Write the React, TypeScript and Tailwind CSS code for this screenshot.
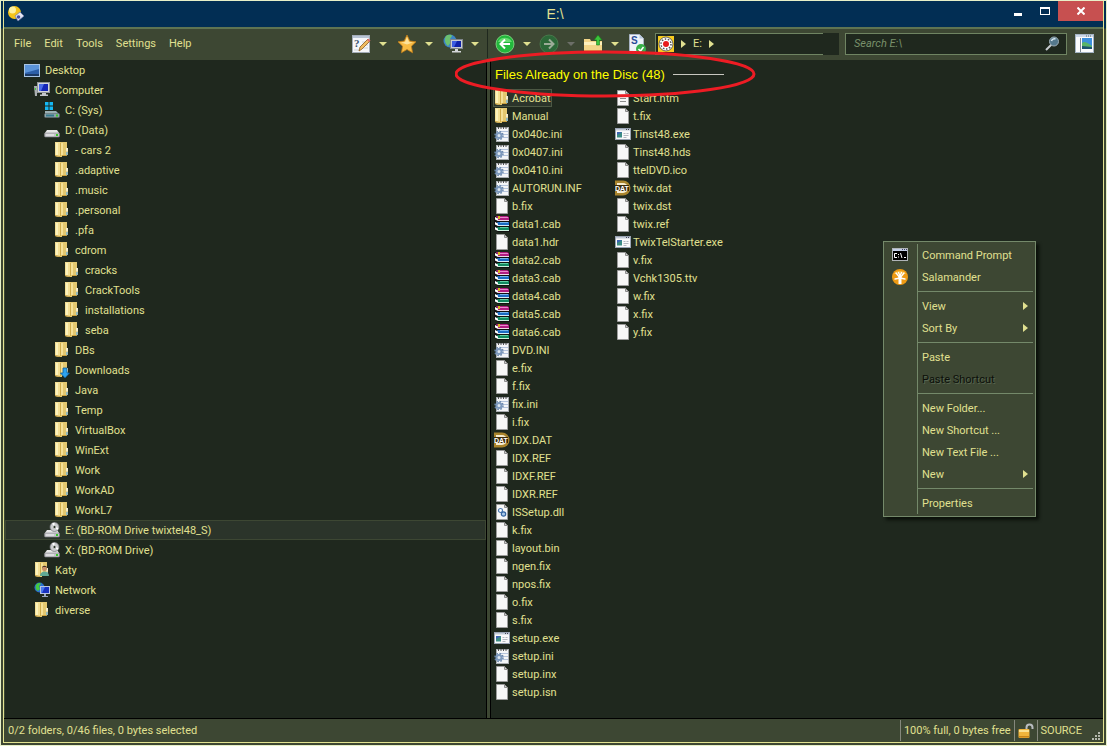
import { useState } from "react";
import type { ReactNode } from "react";

type IconName =
  | "desktop" | "computer" | "sysdrive" | "drive" | "folder" | "downloads"
  | "optical" | "user" | "network" | "ini" | "file" | "cab" | "exe"
  | "dat" | "dll" | "html" | "cmd" | "salamander" | "lock";

type TreeNode = { label: string; icon: IconName; level: number };

const tree: TreeNode[] = [
  { label: "Desktop", icon: "desktop", level: 0 },
  { label: "Computer", icon: "computer", level: 1 },
  { label: "C: (Sys)", icon: "sysdrive", level: 2 },
  { label: "D: (Data)", icon: "drive", level: 2 },
  { label: "- cars 2", icon: "folder", level: 3 },
  { label: ".adaptive", icon: "folder", level: 3 },
  { label: ".music", icon: "folder", level: 3 },
  { label: ".personal", icon: "folder", level: 3 },
  { label: ".pfa", icon: "folder", level: 3 },
  { label: "cdrom", icon: "folder", level: 3 },
  { label: "cracks", icon: "folder", level: 4 },
  { label: "CrackTools", icon: "folder", level: 4 },
  { label: "installations", icon: "folder", level: 4 },
  { label: "seba", icon: "folder", level: 4 },
  { label: "DBs", icon: "folder", level: 3 },
  { label: "Downloads", icon: "downloads", level: 3 },
  { label: "Java", icon: "folder", level: 3 },
  { label: "Temp", icon: "folder", level: 3 },
  { label: "VirtualBox", icon: "folder", level: 3 },
  { label: "WinExt", icon: "folder", level: 3 },
  { label: "Work", icon: "folder", level: 3 },
  { label: "WorkAD", icon: "folder", level: 3 },
  { label: "WorkL7", icon: "folder", level: 3 },
  { label: "E: (BD-ROM Drive twixtel48_S)", icon: "optical", level: 2 },
  { label: "X: (BD-ROM Drive)", icon: "optical", level: 2 },
  { label: "Katy", icon: "user", level: 1 },
  { label: "Network", icon: "network", level: 1 },
  { label: "diverse", icon: "folder", level: 1 },
];

const indents = ["pl-[18px]", "pl-[28px]", "pl-[38px]", "pl-[48px]", "pl-[58px]"];

const columns = [
  [
    "Acrobat", "Manual", "0x040c.ini", "0x0407.ini", "0x0410.ini", "AUTORUN.INF", "b.fix",
    "data1.cab", "data1.hdr", "data2.cab", "data3.cab", "data4.cab", "data5.cab", "data6.cab",
    "DVD.INI", "e.fix", "f.fix", "fix.ini", "i.fix", "IDX.DAT", "IDX.REF", "IDXF.REF",
    "IDXR.REF", "ISSetup.dll", "k.fix", "layout.bin", "ngen.fix", "npos.fix", "o.fix",
    "s.fix", "setup.exe", "setup.ini", "setup.inx", "setup.isn",
  ],
  [
    "Start.htm", "t.fix", "Tinst48.exe", "Tinst48.hds", "ttelDVD.ico", "twix.dat", "twix.dst",
    "twix.ref", "TwixTelStarter.exe", "v.fix", "Vchk1305.ttv", "w.fix", "x.fix", "y.fix",
  ],
];

const extIcons: Record<string, IconName> = {
  ini: "ini", inf: "ini", cab: "cab", exe: "exe", dat: "dat", dll: "dll", htm: "html",
};

function iconFor(name: string): IconName {
  if (!name.includes(".")) return "folder";
  return extIcons[name.split(".")[1].toLowerCase()] ?? "file";
}

const menuGroups: { label: string; icon?: IconName; sub?: boolean; disabled?: boolean }[][] = [
  [{ label: "Command Prompt", icon: "cmd" }, { label: "Salamander", icon: "salamander" }],
  [{ label: "View", sub: true }, { label: "Sort By", sub: true }],
  [{ label: "Paste" }, { label: "Paste Shortcut", disabled: true }],
  [{ label: "New Folder..." }, { label: "New Shortcut ..." }, { label: "New Text File ..." }, { label: "New", sub: true }],
  [{ label: "Properties" }],
];

const page = (
  <>
    <path d="M2.500.5h8l3 3v12h-11z" fill="#f7f7f7" stroke="#9c9c9c" />
    <path d="M10.500 .5v3h3z" fill="#d0d0d0" stroke="#8c8c8c" />
  </>
);

const folder = (
  <>
    <path d="M1 0h12v14H8v1H6l-5-1z" fill="#e4c870" />
    <path d="M1 0h5v15l-5-1z" fill="#f3df94" />
    <path d="M2 1h2v12H2z" fill="#fbf2bc" />
    <path d="M6 1h1v13H6z" fill="#d0ac4c" />
    <path d="M7 1h2v12H7z" fill="#f4e098" />
    <path d="M1 13l5 1v1l-5-1zM8 13h5v1H8z" fill="#c8a040" />
    <path d="M12 6h2v7h-2z" fill="#e4d49c" />
    <path d="M12.500 6h1v3h-1z" fill="#fff" />
    <path d="M12.500 10h1v3h-1z" fill="#3f9be0" />
  </>
);

const disk = (
  <>
    <path d="M3 8h10l2.500 3.500H.5z" fill="#e6e6e6" />
    <rect x=".5" y="11" width="15" height="4" rx="1" fill="#c4c4c8" stroke="#85858a" strokeWidth=".6" />
    <rect x="2" y="12.500" width="8" height="1" fill="#f4f4f4" />
    <rect x="12" y="12" width="2" height="2" fill="#38c828" />
  </>
);

const icons: Record<IconName, ReactNode> = {
  file: page,
  folder,
  desktop: (
    <>
      <rect x=".5" y="2.500" width="15" height="12" fill="#2d5fa8" stroke="#a8c4e4" />
      <path d="M1 3h14v4L1 11z" fill="#5b93d8" />
      <path d="M1 12h14v2H1z" fill="#1c3a66" />
    </>
  ),
  computer: (
    <>
      <path d="M0 4h3v10H1z" fill="#a9aeb0" />
      <path d="M1 6h1v2H1z" fill="#3ed23a" />
      <rect x="3.500" y=".5" width="12" height="10" fill="#d4d6da" stroke="#8f9398" />
      <rect x="5" y="2" width="9" height="7" fill="#1526b8" />
      <path d="M5 2h5L7 9H5z" fill="#4b6be8" />
      <path d="M8 11h4v1.500h2V14H6v-1.500h2z" fill="#c5c8cc" />
    </>
  ),
  sysdrive: (
    <>
      <path d="M1 9h11l3 3H1z" fill="#9bb0b4" />
      <rect x=".5" y="11.500" width="15" height="4" rx="1" fill="#8fa3a8" stroke="#5c6c70" strokeWidth=".6" />
      <rect x="2" y="12.500" width="8" height="2" fill="#34788c" />
      <rect x="12" y="12.500" width="2" height="2" fill="#38c828" />
      <path d="M1 0h3.500v3.500H1zM5.500 0H9v3.500H5.500zM1 4.500h3.500V8H1zM5.500 4.500H9V8H5.500z" fill="#14b8f4" />
    </>
  ),
  drive: disk,
  downloads: (
    <>
      {folder}
      <path d="M9 6h4v5h2.500L11 16 6.500 11H9z" fill="#2ea2ee" stroke="#0b5a9c" strokeWidth=".8" />
    </>
  ),
  optical: (
    <>
      {disk}
      <circle cx="10.500" cy="5" r="4.500" fill="#c9c9cc" stroke="#77777c" strokeWidth=".7" />
      <path d="M10.500 5L8 1.500l2.500-1zM10.500 5l3 3 1-2z" fill="#fff" />
      <circle cx="10.500" cy="5" r="1.500" fill="#2b342a" stroke="#eee" strokeWidth=".6" />
    </>
  ),
  user: (
    <>
      {folder}
      <circle cx="10.500" cy="6.500" r="2.500" fill="#c89068" />
      <path d="M8 6c0-3 5-3 5 0l-1-1H9z" fill="#4a3428" />
      <path d="M6 14c0-6 9-6 9 0z" fill="#5fa894" />
    </>
  ),
  network: (
    <>
      <circle cx="5.500" cy="5.500" r="5" fill="#2a6fd0" />
      <path d="M2 3c2-3 5-2 5-1L5 4l1 3-2 2C2 8 1 6 2 3z" fill="#46c840" />
      <rect x="6.500" y="4.500" width="9" height="7" fill="#1830c0" stroke="#b8c4e0" />
      <path d="M7 5h4L8 11H7z" fill="#4a78ee" />
      <path d="M10 12h2v2h2v1H8v-1h2z" fill="#9aa6c4" />
    </>
  ),
  ini: (
    <>
      <rect x="2.500" y="1.500" width="12" height="14" fill="#f4f6f8" stroke="#a8acb0" />
      <path d="M4 1h1v2H4zM6.500 1h1v2h-1zM9 1h1v2H9zM11.500 1h1v2h-1z" fill="#555" />
      <path d="M7 5.500h7M7 8.500h7M7 11.500h7" stroke="#b4c4dc" />
      <circle cx="5" cy="9.500" r="4" fill="none" stroke="#6684a8" strokeWidth="1.500" strokeDasharray="1.600 1.540" />
      <circle cx="5" cy="9.500" r="2.500" fill="#dce6f0" stroke="#7c98bc" strokeWidth="2" />
    </>
  ),
  cab: (
    <>
      <path d="M0 0h13l3 1v15H4L0 13z" fill="#111" />
      <path d="M2 0h11l2 1v3H4z" fill="#b01c80" />
      <path d="M6 1h8v1H6z" fill="#e888cc" />
      <path d="M4 4h11v1H4z" fill="#f0d8e8" />
      <path d="M3 6h12v3H4z" fill="#1c6cc4" />
      <path d="M6 6h8v1H6z" fill="#74b4ec" />
      <path d="M4 9h11v1H4z" fill="#d8ecf8" />
      <path d="M3 11h12v3H4z" fill="#128a60" />
      <path d="M6 11h8v1H6z" fill="#60d0a4" />
      <path d="M4 14h11v1H4z" fill="#c8f0dc" />
      <path d="M1 1l3 1.500V5L1 3.500zM1 6l3 1.500V10L1 8.500zM1 11l3 1.500V15l-3-1.500z" fill="#fff" />
      <path d="M4 0h2v3H4z" fill="#d8b820" />
    </>
  ),
  exe: (
    <>
      <rect x=".5" y="2.500" width="15" height="11" fill="#fafafa" stroke="#9aa4b4" />
      <path d="M1 3h14v1.500H1z" fill="#c4ccd8" />
      <path d="M11 3h1v1h-1zM13 3h1v1h-1z" fill="#445" />
      <rect x="2" y="6" width="5" height="5.500" fill="#3c8c84" />
      <path d="M2 6h5L2 9z" fill="#3c62b4" />
      <path d="M8.500 7.500h2M11.500 7.500h2M8.500 9.500h5M8.500 11.500h3" stroke="#b4b8c0" />
    </>
  ),
  dat: (
    <>
      <path d="M0 .5h8a7.500 7.500 0 0 1 0 15H0z" fill="#a9842c" />
      <path d="M2 3h6a5 5 0 0 1 0 10H2z" fill="#f6ecd0" />
      <rect y="5" width="14" height="6" fill="#3a2a08" />
      <text x="0" y="10.500" fontSize="7" fontWeight="bold" fill="#fff" fontFamily="Liberation Sans, sans-serif">DAT</text>
    </>
  ),
  dll: (
    <>
      {page}
      <circle cx="6.500" cy="6.500" r="2" fill="#fff" stroke="#4a78b0" strokeWidth="1.200" />
      <circle cx="9.500" cy="10" r="2.200" fill="#a8c8e8" stroke="#3464a0" strokeWidth="1.200" />
    </>
  ),
  html: (
    <>
      {page}
      <path d="M5 5.500h3M5 8.500h6M5 11.500h6" stroke="#8c8c8c" />
    </>
  ),
  cmd: (
    <>
      <rect x=".5" y="1.500" width="15" height="12" fill="#000" stroke="#b0b4b8" />
      <path d="M1 2h14v2H1z" fill="#c4d0e8" />
      <path d="M10 2h1v1h-1zM12 2h1v1h-1zM14 2h1v1h-1z" fill="#446" />
      <path d="M5 6.500H2.500v4H5M6.500 7v1M6.500 9.500v1M8.500 6l1.500 5M12 10.500h2" stroke="#fff" fill="none" />
    </>
  ),
  salamander: (
    <>
      <circle cx="8" cy="8" r="8" fill="#ee9a14" />
      <path d="M2 5a7 6 0 0 1 12 0z" fill="#f8c048" />
      <path d="M4 4l4 5 4-5M3 10l5-1 5 1M6.500 3.500L8 7l1.500-3.500" stroke="#fff" strokeWidth="1.300" strokeLinecap="round" fill="none" />
      <path d="M6.500 8h3v7h-3z" fill="#fff" />
    </>
  ),
  lock: (
    <>
      <path d="M8.500 7V4.500a3 3 0 0 1 6 0V6" fill="none" stroke="#b9bcc0" strokeWidth="2" />
      <rect x=".5" y="6" width="11" height="9" rx="1" fill="#f0b43c" />
      <path d="M1 7h10v2H1z" fill="#fbe090" />
      <path d="M1 13h10v1.500H1z" fill="#c88418" />
    </>
  ),
};

function Icon({ name }: { name: IconName }) {
  return (
    <svg className="h-4 w-4 shrink-0" viewBox="0 0 16 16" aria-hidden="true">
      {icons[name]}
    </svg>
  );
}

function Caret({ label, dim }: { label: string; dim?: boolean }) {
  return (
    <button aria-label={label} className="flex h-5 w-6 items-center justify-center">
      <svg className="h-1 w-2" viewBox="0 0 8 4">
        <path d="M0 0h8L4 4z" fill={dim ? "#6c6f68" : "#e0e090"} />
      </svg>
    </button>
  );
}

function Crumb() {
  return (
    <svg className="mx-[7px] h-2 w-[5px] shrink-0" viewBox="0 0 5 8" aria-hidden="true">
      <path d="M0 0l5 4-5 4z" fill="#e0e090" />
    </svg>
  );
}

function ToolButton({ label, children }: { label: string; children: ReactNode }) {
  return (
    <button aria-label={label} className="h-5 w-5 shrink-0">
      <svg className="h-5 w-5" viewBox="0 0 20 20">{children}</svg>
    </button>
  );
}

function TitleBar() {
  return (
    <header className="flex h-[26px] items-start bg-[#022e54]">
      <div className="flex flex-1 items-center pt-1 pl-[3px]">
        <svg className="h-[18px] w-[18px]" viewBox="0 0 18 18" aria-hidden="true">
          <circle cx="7.500" cy="7.500" r="6.500" fill="#f4c41c" />
          <circle cx="5.500" cy="5" r="3.500" fill="#fdf0a0" />
          <path d="M8 11l5-4 4 4-6 5z" fill="#e4e6f4" stroke="#7078a8" strokeWidth=".7" />
          <circle cx="11.500" cy="12" r="1.800" fill="#4850a0" />
        </svg>
      </div>
      <h1 className="self-center font-['Liberation_Sans',sans-serif] text-sm">E:\</h1>
      <div className="flex flex-1 justify-end">
        <button aria-label="Minimize" className="flex h-5 w-7 items-center justify-center pt-1.5">
          <span className="h-[3px] w-2 bg-white" />
        </button>
        <button aria-label="Maximize" className="flex h-5 w-[26px] items-center justify-center">
          <span className="h-2 w-2.5 border border-t-2 border-white" />
        </button>
        <button aria-label="Close" className="flex h-5 w-[45px] items-center justify-center bg-[#c75050]">
          <svg className="h-2 w-2" viewBox="0 0 8 8">
            <path d="M.5.5l7 7M7.500.5l-7 7" stroke="#fff" strokeWidth="2" />
          </svg>
        </button>
      </div>
    </header>
  );
}

function LeftToolbar() {
  return (
    <div className="flex w-[484px] shrink-0 items-center border-r border-[#1f281e]">
      <nav className="flex flex-1 gap-[13px] pl-[10px]">
        {["File", "Edit", "Tools", "Settings", "Help"].map((item) => (
          <button key={item}>{item}</button>
        ))}
      </nav>
      <div className="flex items-center gap-0.5">
        <div className="flex">
          <ToolButton label="Customize">
            <rect x="1.500" y="1.500" width="17" height="17" fill="#f6f7f9" stroke="#a4adb8" />
            <path d="M2 2h16v2H2z" fill="#b8c4d4" />
            <text x="3" y="13" fontSize="11" fontWeight="bold" fill="#38506c" fontFamily="Liberation Serif, serif">?</text>
            <path d="M3 16h6M11 8h6M11 11h6M11 14h6" stroke="#ccd2da" />
            <path d="M8 17l1-4 8-8 2 2-8 8z" fill="#f0bc60" stroke="#8c5c20" strokeWidth=".8" />
            <path d="M16 6l1.500-1.500 2 2L18 8z" fill="#e07070" />
          </ToolButton>
          <Caret label="Customize options" />
        </div>
        <div className="flex">
          <ToolButton label="Favorites">
            <path d="M10 1l2.800 6 6.200.8-4.600 4.400 1.200 6.600L10 15.500l-5.600 3.300 1.200-6.600L1 7.800 7.200 7z" fill="#f8bc44" stroke="#c07c18" strokeWidth=".8" />
            <path d="M10 3l2 5 4 .5-6 2-6-2L8 8z" fill="#fde29a" />
          </ToolButton>
          <Caret label="Favorites options" />
        </div>
        <div className="flex">
          <ToolButton label="Network">
            <circle cx="7" cy="7" r="6.500" fill="#3c84c4" />
            <path d="M3 2c3-2 6-1 6 0L7 5l2 2-4 5C2 10 1 5 3 2z" fill="#6cc070" />
            <rect x="7.500" y="5.500" width="12" height="9" fill="#c8ccd0" stroke="#80868c" />
            <rect x="9" y="7" width="9" height="6" fill="#1022a8" />
            <path d="M9 7h5l-3 6H9z" fill="#3c5ce0" />
            <path d="M12 15h3v2h3v1.500H9V17h3z" fill="#d4d6d8" />
          </ToolButton>
          <Caret label="Network options" />
        </div>
      </div>
    </div>
  );
}

function RightToolbar() {
  return (
    <div className="flex min-w-0 flex-1 items-center pr-2 pl-[7px]">
      <ToolButton label="Back">
        <circle cx="10" cy="10" r="9" fill="#22b83c" stroke="#8ce08c" strokeWidth=".8" />
        <path d="M3 8a7.500 6.500 0 0 1 14 0z" fill="#66dc70" />
        <path d="M15 10H6M10 5.500L5.500 10l4.500 4.500" stroke="#fff" strokeWidth="2" fill="none" />
      </ToolButton>
      <Caret label="Back history" />
      <ToolButton label="Forward">
        <circle cx="10" cy="10" r="9" fill="#2c6838" stroke="#4c8050" strokeWidth=".8" />
        <path d="M5 10h9M10 5.500l4.500 4.500-4.500 4.500" stroke="#9cac98" strokeWidth="2" fill="none" />
      </ToolButton>
      <Caret label="Forward history" dim />
      <ToolButton label="Up">
        <path d="M1 5h6l1 2h11v10H1z" fill="#f2d588" />
        <path d="M1 8h18v3H1z" fill="#fdf0bc" />
        <path d="M1 16h18v1H1z" fill="#d8ac50" />
        <path d="M15 1l4 5h-2.500v5h-3V6H11z" fill="#3cc43c" stroke="#167818" strokeWidth=".6" />
      </ToolButton>
      <Caret label="Parent folders" />
      <ToolButton label="Sync">
        <path d="M2.500.5h10l4 4v14h-14z" fill="#eef2f8" stroke="#a8b4c4" />
        <path d="M12.500.5v4h4z" fill="#b8c8dc" />
        <text x="4" y="10" fontSize="10" fontWeight="bold" fill="#284c98" fontFamily="Liberation Sans, sans-serif">S</text>
        <circle cx="14" cy="15" r="5" fill="#38b048" />
        <path d="M11.500 15l2 2 3-4" stroke="#fff" strokeWidth="1.500" fill="none" />
      </ToolButton>
      <div className="ml-2 flex h-[22px] flex-1">
        <div className="flex flex-1 items-center border border-r-0 border-[#6f8462] bg-[#1f281e] pl-0.5">
          <svg className="h-4 w-4" viewBox="0 0 16 16" aria-hidden="true">
            <path d="M0 0h16v16H0z" fill="#f8cc20" />
            <circle cx="8" cy="8" r="7" fill="#fff" stroke="#444" strokeWidth=".8" />
            <circle cx="8" cy="8" r="5" fill="none" stroke="#555" strokeWidth="1.500" strokeDasharray="1.500 1.600" />
            <circle cx="8" cy="8" r="3" fill="#e81c1c" />
          </svg>
          <Crumb />
          <button>E:</button>
          <Crumb />
        </div>
        <button aria-label="Address history" className="w-4 bg-[#1f281e]" />
      </div>
      <label className="ml-1.5 flex h-[22px] w-[222px] items-center border border-[#6f8462] bg-[#1f281e] pr-1.5 pl-2">
        <input
          type="text"
          aria-label="Search"
          placeholder="Search E:\"
          className="min-w-0 flex-1 bg-transparent italic outline-none placeholder:text-[#78906a]"
        />
        <svg className="h-4 w-4" viewBox="0 0 16 16" aria-hidden="true">
          <path d="M2 14l6-6" stroke="#c8ccd0" strokeWidth="2" />
          <circle cx="10" cy="5.500" r="4.500" fill="#54788c" stroke="#9cacb4" />
          <path d="M7.500 5a3 3 0 0 1 4-2" stroke="#dcecf4" strokeWidth="1.500" fill="none" />
        </svg>
      </label>
      <span className="w-2" />
      <ToolButton label="Preview pane">
        <rect x=".5" y=".5" width="18" height="18" fill="#fbfcfd" stroke="#a4b4c4" />
        <path d="M1 1h17v2H1z" fill="#ccd8e8" />
        <path d="M11 1.500h1v1h-1zM13 1.500h1v1h-1zM15 1.500h1v1h-1z" fill="#566" />
        <path d="M5 4h1v14H5z" fill="#7c8894" />
        <rect x="7" y="4" width="10" height="11" fill="#3c90dc" />
        <path d="M7 9c3-3 7 1 10 3v3H7z" fill="#58b468" />
        <path d="M7 12l10 1v2H7z" fill="#1c5470" />
      </ToolButton>
    </div>
  );
}

function ContextMenu() {
  return (
    <div
      role="menu"
      className="absolute top-[240px] left-[882px] w-[153px] border border-[#74896a] bg-[#3d4733] py-0.5 shadow-[3px_3px_3px_#0b100a]"
    >
      {menuGroups.map((group, g) => (
        <div key={g} className="flex flex-col">
          {g > 0 && (
            <div className="flex h-[7px]">
              <span className="w-[34px] border-r border-[#74896a]" />
              <span className="mr-0.5 h-1 flex-1 border-b border-[#74896a]" />
            </div>
          )}
          {group.map((item) => (
            <button key={item.label} role="menuitem" disabled={item.disabled} className="flex h-[22px] items-center text-left">
              <span className="flex h-full w-[34px] shrink-0 items-center border-r border-[#74896a] pl-2">
                {item.icon && <Icon name={item.icon} />}
              </span>
              <span className={item.disabled ? "flex-1 pl-1 text-[#0c0f0a] [text-shadow:1px_1px_0_#586650]" : "flex-1 pl-1"}>
                {item.label}
              </span>
              {item.sub && <Crumb />}
            </button>
          ))}
        </div>
      ))}
    </div>
  );
}

function App() {
  const [place, setPlace] = useState("E: (BD-ROM Drive twixtel48_S)");
  const [selected, setSelected] = useState("Acrobat");

  return (
    <div className="relative flex min-h-screen flex-col border border-[#e8f0c8] bg-gradient-to-b from-[#022e54] from-[27px] to-[#3d4733] to-[28px] px-0.5 pb-0.5 font-['Roboto',sans-serif] text-[11px] leading-[17px] text-[#e0e090]">
      <div className="flex flex-1 flex-col border border-t-0 border-[#e4e492] bg-[#3d4733]">
        <TitleBar />
        {/* Toolbars */}
        <div className="flex h-[33px] border-t-2 border-[#5f7452] pb-0.5">
          <LeftToolbar />
          <RightToolbar />
        </div>
        {/* Panes */}
        <main className="flex flex-1 border-b border-black">
          <ul className="ml-px w-[482px] shrink-0 border-r border-black bg-[#1f281e]">
            {tree.map((node, i) => (
              <li key={i}>
                <button
                  onClick={() => setPlace(node.label)}
                  className={`flex h-5 w-full items-center gap-[5px] border whitespace-nowrap ${indents[node.level]} ${
                    node.label === place ? "border-[#3d4733] bg-[#2b342a]" : "border-transparent"
                  }`}
                >
                  <Icon name={node.icon} />
                  {node.label}
                </button>
              </li>
            ))}
          </ul>
          <section className="ml-[3px] flex-1 border-l border-black bg-[#1f281e] pb-4">
            <div className="flex h-[29px] items-center gap-2 pl-1">
              <h2 className="font-['Liberation_Sans',sans-serif] text-[13px] text-[#ffff00]">Files Already on the Disc (48)</h2>
              <span className="h-px w-[51px] bg-[#c8c8c0]" />
            </div>
            <div className="flex pl-0.5">
              {columns.map((files, c) => (
                <ul key={c} className="w-[121px]">
                  {files.map((file) => (
                    <li key={file} className="h-[18px]">
                      <button
                        onClick={() => setSelected(file)}
                        className={`flex h-[18px] items-center gap-0.5 border whitespace-nowrap ${
                          file === selected ? "border-[#4c5844] bg-[#2b342a]" : "border-transparent"
                        }`}
                      >
                        <Icon name={iconFor(file)} />
                        {file}
                      </button>
                    </li>
                  ))}
                </ul>
              ))}
            </div>
          </section>
        </main>
        {/* Status bar */}
        <footer className="flex h-[23px] items-center pl-1">
          <span className="flex-1">0/2 folders, 0/46 files, 0 bytes selected</span>
          <span className="flex h-[21px] items-center border-l border-[#85887c] px-[3px]">100% full, 0 bytes free</span>
          <span className="flex h-[21px] items-center border-l border-[#85887c] px-[3px]">
            <Icon name="lock" />
          </span>
          <span className="flex h-[21px] items-center border-l border-[#85887c] pr-2.5 pl-[3px]">SOURCE</span>
          <svg className="mr-[3px] mb-0.5 h-2 w-2 self-end" viewBox="0 0 8 8" aria-hidden="true">
            <path d="M6 0h2v2H6zM3 3h2v2H3zM6 3h2v2H6zM0 6h2v2H0zM3 6h2v2H3zM6 6h2v2H6z" fill="#b4b8ac" />
          </svg>
        </footer>
      </div>
      {/* Marker round the group heading */}
      <svg className="pointer-events-none absolute top-[49px] left-[454px] h-[50px] w-[301px]" viewBox="0 0 301 50" aria-hidden="true">
        <ellipse cx="150" cy="24" rx="149" ry="22" fill="none" stroke="#ed1c24" strokeWidth="3" />
      </svg>
      <ContextMenu />
    </div>
  );
}

export default App;
